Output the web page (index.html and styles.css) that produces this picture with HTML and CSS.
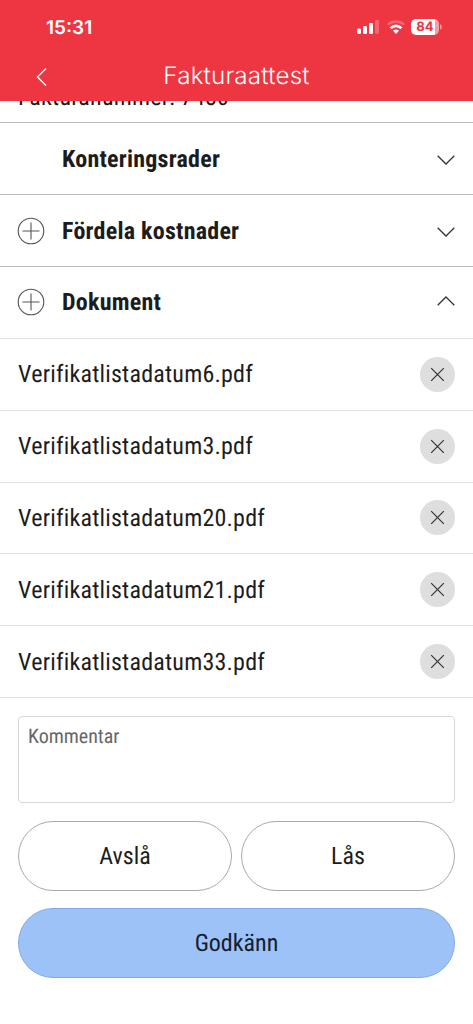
FILE: index.html
```html
<!DOCTYPE html>
<html lang="sv">
<head>
<meta charset="utf-8">
<title>Fakturaattest</title>
<link rel="stylesheet" href="styles.css">
</head>
<body>
<header class="header">
  <div class="status">
    <span class="time">15:31</span>
    <div class="indicators">
      <svg class="signal" width="22" height="14" viewBox="0 0 22 14"><g fill="#fff"><rect x="0" y="8.5" width="4" height="5.5" rx="1.2"/><rect x="6" y="6" width="4" height="8" rx="1.2"/><rect x="12" y="3" width="4" height="11" rx="1.2"/><rect x="18" y="0" width="4" height="14" rx="1.2" opacity=".25"/></g></svg>
      <svg class="wifi" width="18" height="14" viewBox="0 0 18 14" fill="none" stroke="#fff" stroke-width="2.3"><path d="M.9 4.8C5.4.4 12.6.4 17.1 4.8" opacity=".25"/><path d="M3.6 8.2C6.6 5.2 11.4 5.2 14.4 8.2" stroke-width="2.8"/><path d="M6 10.8C7.7 9.2 10.3 9.2 12 10.8L9 13.9Z" fill="#fff" stroke="none"/></svg>
      <div class="battery"><span class="level">84</span><svg width="2" height="6" viewBox="0 0 2 6"><path d="M0 0Q2 1 2 3T0 6Z" fill="#fff" opacity=".45"/></svg></div>
    </div>
  </div>
  <div class="nav">
    <svg class="back" width="12" height="20" viewBox="0 0 12 20" fill="none" stroke="#fff" stroke-width="1.5"><path d="M10 1.5 1.5 10 10 18.5"/></svg>
    <h1 class="title">Fakturaattest</h1>
  </div>
</header>
<main>
  <div class="scrolled"><span class="scrolled-text">Fakturanummer: 7480</span></div>
  <section class="row"><span class="slot"></span><h2 class="heading">Konteringsrader</h2><svg class="chevron" width="18" height="10" viewBox="0 0 18 10"><path d="M.7.8 9 9 17.3.8"/></svg></section>
  <section class="row"><span class="slot"><svg class="plus" width="28" height="28" viewBox="0 0 28 28"><circle cx="14" cy="14" r="12.8"/><path d="M14 5.5v17M5.5 14h17"/></svg></span><h2 class="heading">Fördela kostnader</h2><svg class="chevron" width="18" height="10" viewBox="0 0 18 10"><path d="M.7.8 9 9 17.3.8"/></svg></section>
  <section class="row open"><span class="slot"><svg class="plus" width="28" height="28" viewBox="0 0 28 28"><circle cx="14" cy="14" r="12.8"/><path d="M14 5.5v17M5.5 14h17"/></svg></span><h2 class="heading">Dokument</h2><svg class="chevron up" width="18" height="10" viewBox="0 0 18 10"><path d="M.7 9.2 9 1 17.3 9.2"/></svg></section>
  <div class="row file"><span class="name">Verifikatlistadatum6.pdf</span><span class="remove"><svg width="15" height="15" viewBox="0 0 15 15"><path d="M1.2 1.2 13.8 13.8M13.8 1.2 1.2 13.8"/></svg></span></div>
  <div class="row file"><span class="name">Verifikatlistadatum3.pdf</span><span class="remove"><svg width="15" height="15" viewBox="0 0 15 15"><path d="M1.2 1.2 13.8 13.8M13.8 1.2 1.2 13.8"/></svg></span></div>
  <div class="row file"><span class="name">Verifikatlistadatum20.pdf</span><span class="remove"><svg width="15" height="15" viewBox="0 0 15 15"><path d="M1.2 1.2 13.8 13.8M13.8 1.2 1.2 13.8"/></svg></span></div>
  <div class="row file"><span class="name">Verifikatlistadatum21.pdf</span><span class="remove"><svg width="15" height="15" viewBox="0 0 15 15"><path d="M1.2 1.2 13.8 13.8M13.8 1.2 1.2 13.8"/></svg></span></div>
  <div class="row file"><span class="name">Verifikatlistadatum33.pdf</span><span class="remove"><svg width="15" height="15" viewBox="0 0 15 15"><path d="M1.2 1.2 13.8 13.8M13.8 1.2 1.2 13.8"/></svg></span></div>
  <div class="form">
    <div class="comment"><span class="placeholder">Kommentar</span></div>
    <div class="actions">
      <div class="button"><span class="label">Avslå</span></div>
      <div class="button"><span class="label">Lås</span></div>
    </div>
    <div class="button primary"><span class="label">Godkänn</span></div>
  </div>
</main>
</body>
</html>
```
FILE: styles.css
```css
* { box-sizing: border-box; }
body { margin: 0; background: #fff; color: #1c1c1c; font-family: "Roboto Condensed", Roboto, sans-serif; font-stretch: 75%; font-size: 24px; letter-spacing: .22px; text-rendering: geometricPrecision; overflow: hidden; }
svg { display: block; flex: none; }
.header { height: 100.6px; background: #ee3643; color: #fff; font-family: Inter, sans-serif; font-stretch: normal; letter-spacing: 0; }
.status { height: 54px; padding: 0 31px 0 46px; display: flex; justify-content: space-between; align-items: center; }
.time { font-size: 19px; font-weight: 600; }
.indicators { display: flex; align-items: center; }
.signal { margin-right: 8px; }
.battery { margin-left: 6px; display: flex; align-items: center; gap: 1px; }
.level { width: 28px; height: 16px; border-radius: 5px; background: linear-gradient(90deg, #fff 24px, #f6a0a5 24px); color: #ee3643; font-size: 13px; font-weight: 700; line-height: 17px; text-align: center; }
.nav { height: 46px; padding: 0 36px; display: grid; grid-template-columns: 12px 1fr 12px; align-items: center; }
.title { margin: 0; text-align: center; font-size: 24.2px; font-weight: 350; letter-spacing: .2px; line-height: 44px; padding-bottom: 2px; }
.scrolled { height: 22.7px; border-bottom: 1px solid #bababa; overflow: hidden; padding-left: 18px; }
.scrolled-text { display: block; margin-top: -18px; line-height: 28px; white-space: nowrap; }
.row { height: 71.85px; padding: 0 18px; display: flex; align-items: center; border-bottom: 1px solid #bababa; }
.open, .file { border-bottom-color: #e0e0e0; }
.slot { width: 44px; margin-left: -1px; }
.heading { flex: 1; margin: 0; font-size: 24px; font-weight: 700; padding-left: 1px; letter-spacing: .24px; }
.chevron { fill: none; stroke: #333; stroke-width: 1.3; margin-top: 2px; }
.up { margin-top: -2px; }
.plus { fill: none; stroke: #555; stroke-width: 1.1; }
.file { justify-content: space-between; }
.name { white-space: nowrap; }
.remove { width: 35px; height: 35px; border-radius: 50%; background: #dedede; display: grid; place-items: center; }
.remove svg { fill: none; stroke: #333; stroke-width: 1.2; }
.form { padding: 18px 18px 0; display: grid; gap: 18px; }
.comment { height: 87px; border: 1px solid #d8d8d8; border-radius: 4px; padding: 7px 9px; font-size: 20px; line-height: 24px; color: #666; letter-spacing: 0; }
.actions { display: grid; grid-template-columns: 1fr 1fr; gap: 9px; }
.button { height: 70px; border: 1px solid #aaa; border-radius: 35px; display: grid; place-items: center; letter-spacing: 0; }
.primary { background: #9cc2f8; border-color: #7eaaea; color: #14202e; margin-top: -1px; }
```
